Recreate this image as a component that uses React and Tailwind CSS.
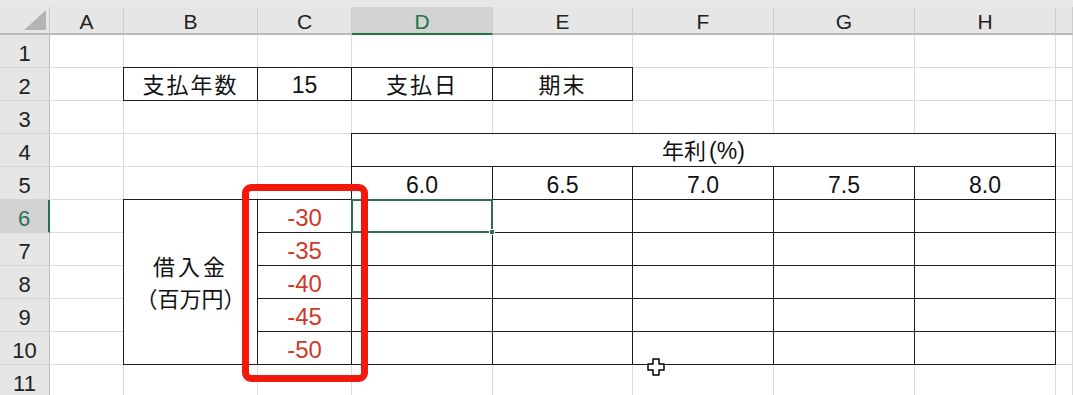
import React from "react";

const COL = ["", "col-start-1", "col-start-2", "col-start-3", "col-start-4", "col-start-5", "col-start-6", "col-start-7", "col-start-8", "col-start-9", "col-start-10"];
const ROW = ["", "row-start-1", "row-start-2", "row-start-3", "row-start-4", "row-start-5", "row-start-6", "row-start-7", "row-start-8", "row-start-9", "row-start-10", "row-start-11", "row-start-12"];

const LETTERS = ["A", "B", "C", "D", "E", "F", "G", "H", ""];
const FONT = "font-['Liberation_Sans','Noto_Sans_CJK_JP',sans-serif]";

function Cell({ c, r, className = "", children }) {
  return (
    <div className={`${COL[c]} ${ROW[r]} ${className}`}>{children}</div>
  );
}

function Boxed({ c, r, span = "", className = "", children }) {
  return (
    <div
      className={`${COL[c]} ${ROW[r]} ${span} -mt-px -ml-px border border-[#1c1c1c] bg-white flex items-center justify-center ${className}`}
    >
      {children}
    </div>
  );
}

export default function App() {
  const base = [];
  for (let r = 2; r <= 12; r++) {
    for (let c = 2; c <= 10; c++) {
      base.push(
        <Cell key={`b${r}-${c}`} c={c} r={r} className="border-r border-b border-[#dcdcdc] bg-white" />
      );
    }
  }

  const rates = ["6.0", "6.5", "7.0", "7.5", "8.0"];
  const loans = ["-30", "-35", "-40", "-45", "-50"];

  return (
    <div className={`relative w-[1073px] h-[395px] overflow-hidden bg-white ${FONT} text-[#111]`}>
      <div className="h-[7px] bg-[#e8e8e8]" />
      <div className="grid grid-cols-[50px_74px_134px_94px_141px_140px_141px_141px_141px_17px] grid-rows-[28px_repeat(11,33px)]">
        {/* corner */}
        <Cell c={1} r={1} className="bg-[#e6e6e6] border-r border-[#c9c9c9] border-b-2 border-b-[#b9b9b9] flex items-end justify-end pr-[3px] pb-[3px]">
          <svg width="22" height="20" viewBox="0 0 22 20">
            <polygon points="22,0 22,20 0,20" fill="#b4b4b4" />
          </svg>
        </Cell>
        {LETTERS.map((l, i) => {
          const sel = l === "D";
          return (
            <Cell
              key={`h${i}`}
              c={i + 2}
              r={1}
              className={`flex items-center justify-center pt-[3px] text-[21px] border-r border-[#cdcdcd] border-b-2 ${
                sel ? "bg-[#d3d3d3] text-[#217346] border-b-[#217346]" : "bg-[#e6e6e6] text-[#222] border-b-[#b9b9b9]"
              }`}
            >
              {l}
            </Cell>
          );
        })}
        {/* row headers */}
        {Array.from({ length: 11 }, (_, i) => {
          const sel = i + 1 === 6;
          return (
            <Cell
              key={`r${i}`}
              c={1}
              r={i + 2}
              className={`flex items-center justify-center pt-[5px] text-[22px] border-b border-[#d4d4d4] ${
                sel ? "bg-[#d3d3d3] text-[#2f6f4f] border-r-2 border-r-[#217346]" : "bg-[#e6e6e6] text-[#222] border-r border-r-[#bdbdbd]"
              }`}
            >
              {i + 1}
            </Cell>
          );
        })}
        {base}

        {/* Row 2 */}
        <Boxed c={3} r={3} className="text-[22px] tracking-[2px] pt-[3px]">支払年数</Boxed>
        <Boxed c={4} r={3} className="text-[23px] pt-[3px]">15</Boxed>
        <Boxed c={5} r={3} className="text-[22px] tracking-[2px] pt-[3px]">支払日</Boxed>
        <Boxed c={6} r={3} className="text-[22px] tracking-[2px] pt-[3px]">期末</Boxed>

        {/* Row 4 merged */}
        <Boxed c={5} r={5} span="col-span-5" className="text-[22px] pt-[3px]">
          <span>年利</span>
          <span className="ml-[3px] text-[23px]">(%)</span>
        </Boxed>

        {/* Row 5 */}
        {rates.map((v, i) => (
          <Boxed key={`rate${i}`} c={5 + i} r={6} className="text-[23px] pt-[5px]">
            {v}
          </Boxed>
        ))}

        {/* Loan label */}
        <Boxed c={3} r={7} span="row-span-5" className="flex-col text-[22px] leading-[32px] pt-[4px]">
          <span className="tracking-[3px]">借入金</span>
          <span>（百万円）</span>
        </Boxed>

        {loans.map((v, i) => (
          <Boxed key={`loan${i}`} c={4} r={7 + i} className="text-[24px] text-[#cc3a2c] pt-[4px]">
            {v}
          </Boxed>
        ))}

        {loans.map((_, i) =>
          rates.map((__, j) => <Boxed key={`d${i}-${j}`} c={5 + j} r={7 + i} />)
        )}

        {/* selection */}
        <div className={`${COL[5]} ${ROW[7]} relative -mt-px -ml-px border-2 border-[#2f6f4f]`}>
          <div className="absolute -right-[4px] -bottom-[4px] w-[6px] h-[6px] bg-[#2f6f4f] border border-white" />
        </div>
      </div>

      {/* red annotation box */}
      <div className="absolute left-[242px] top-[184px] w-[126px] h-[198px] border-[7px] border-[#f2190c] rounded-[9px]" />

      {/* cursor */}
      <svg className="absolute left-[647px] top-[358px]" width="18" height="18" viewBox="0 0 18 18">
        <path
          d="M6 1 H12 V6 H17 V12 H12 V17 H6 V12 H1 V6 H6 Z"
          fill="#fff"
          stroke="#000"
          strokeWidth="1.5"
          strokeLinejoin="round"
        />
      </svg>
    </div>
  );
}
